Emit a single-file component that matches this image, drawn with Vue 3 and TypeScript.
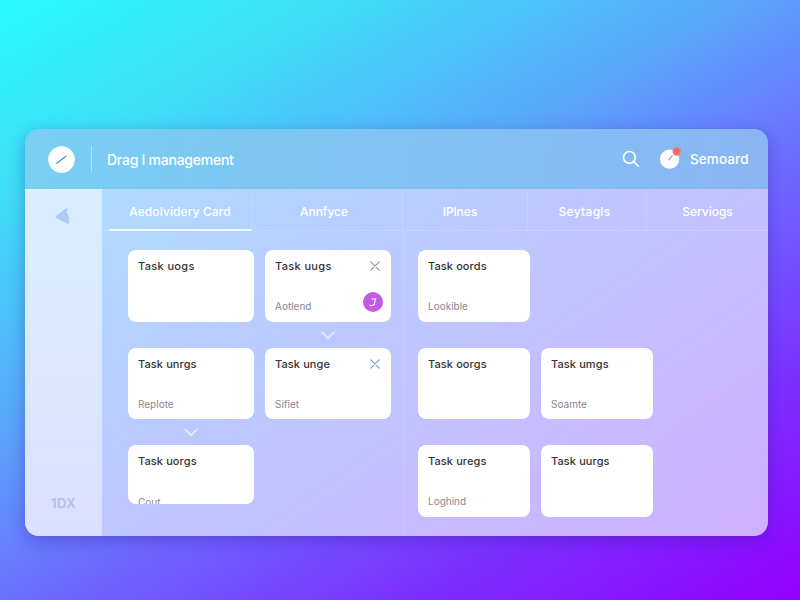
<script setup lang="ts">
interface Task {
  title: string
  note?: string
  close?: 'grey' | 'blue'
  badge?: boolean
  arrow?: boolean
  clipped?: boolean
}

const tabs: string[] = ['Aedolvidery Card', 'Annfyce', 'IPlnes', 'Seytagls', 'Serviogs']

const rows: (Task | null)[][] = [
  [
    { title: 'Task uogs' },
    { title: 'Task uugs', note: 'Aotlend', close: 'grey', badge: true, arrow: true },
    { title: 'Task oords', note: 'Lookible' },
    null,
  ],
  [
    { title: 'Task unrgs', note: 'Replote', arrow: true },
    { title: 'Task unge', note: 'Sifiet', close: 'blue' },
    { title: 'Task oorgs' },
    { title: 'Task umgs', note: 'Soamte' },
  ],
  [
    { title: 'Task uorgs', note: 'Cout', clipped: true },
    null,
    { title: 'Task uregs', note: 'Loghind' },
    { title: 'Task uurgs' },
  ],
]
</script>

<template>
  <main class="scene">
    <section class="panel">
      <header class="header">
        <svg class="logo" viewBox="0 0 27 27">
          <circle cx="13.5" cy="13.5" r="13.3" fill="#fff" />
          <path d="M8.8 17.3 L18 10.2" stroke="#5489b8" stroke-width="1.2" stroke-linecap="round" />
        </svg>
        <span class="divider"></span>
        <h1 class="brand"><span>Drag I management</span></h1>
        <svg class="search" viewBox="0 0 18 18" fill="none" stroke="#fff" stroke-width="1.7" stroke-linecap="round">
          <circle cx="7.4" cy="7.4" r="5.9" />
          <path d="M11.8 11.8 L16.3 16.2" />
        </svg>
        <svg class="avatar" viewBox="0 0 24 24">
          <circle cx="10.6" cy="13.2" r="9.6" fill="#fff" />
          <circle cx="17.7" cy="5.5" r="4.2" fill="#e9786d" />
          <circle cx="17.9" cy="5.4" r="1.5" fill="none" stroke="#c9686f" stroke-width=".8" />
          <path d="M9.7 14.3 C9.5 12.5 11.5 11.5 13.3 9.2 C13 11.6 11.2 12 9.7 14.3Z" fill="#84abc9" stroke="#84abc9" stroke-width=".7" />
        </svg>
        <span class="user">Semoard</span>
      </header>

      <div class="body">
        <aside class="sidebar">
          <svg class="back" viewBox="0 0 16 18">
            <path d="M1 9 L9.6 2.3 Q12.6 0 12.8 2.6 L11.6 5.6 L14.2 9.6 V15.6 Q14.2 17.4 12.2 16.7 L1.4 11.2 Q-.2 10.2 1 9Z" fill="#aecbf4" />
          </svg>
          <span class="zoom">1DX</span>
        </aside>

        <div class="content">
          <nav class="tabs">
            <a v-for="(tab, i) in tabs" :key="tab" class="tab" :class="{ active: i === 0 }">
              <span>{{ tab }}</span>
            </a>
          </nav>

          <div class="board">
            <template v-for="(row, r) in rows" :key="r">
              <div v-for="(task, c) in row" :key="c" class="cell">
                <article v-if="task" class="card" :class="{ clipped: task.clipped }">
                  <div class="top">
                    <h2>{{ task.title }}</h2>
                    <svg v-if="task.close" class="close" :class="task.close" viewBox="0 0 10 10">
                      <path d="M.8 .8 L9.2 9.2 M9.2 .8 L.8 9.2" />
                    </svg>
                  </div>
                  <div class="bottom">
                    <p>{{ task.note }}</p>
                    <svg v-if="task.badge" class="badge" viewBox="0 0 20 20">
                      <circle cx="10" cy="10" r="10" fill="#c35be4" />
                      <path d="M9 7.1 L12.7 6.7 Q13 7.8 11.5 10 Q12.2 12.6 9.6 13.2 L7.1 13.5" fill="none" stroke="#fff" stroke-width="1.1" stroke-linecap="round" stroke-linejoin="round" />
                    </svg>
                  </div>
                </article>
                <svg v-if="task?.arrow" class="arrow" viewBox="0 0 14 9">
                  <path d="M1 1.2 L7 7.2 L13 1.2" />
                </svg>
              </div>
            </template>
          </div>
        </div>
      </div>
    </section>
  </main>
</template>

<style>
body {
  margin: 0;
  overflow: hidden;
}
</style>

<style scoped>
* {
  box-sizing: border-box;
}
.scene {
  width: 800px;
  height: 600px;
  padding: 129px 32px 64px 25px;
  font-family: Inter, "Liberation Sans", sans-serif;
  background: linear-gradient(150deg, #28fbff 0%, #3fdcf8 19%, #58aafa 39%, #6b72ff 56%, #7c2fff 79%, #9400ff 100%);
}
.panel {
  display: flex;
  flex-direction: column;
  height: 407px;
  border-radius: 14px;
  overflow: hidden;
  box-shadow: 0 5px 16px rgba(45, 20, 150, 0.32);
}
.header {
  flex: 0 0 60px;
  display: flex;
  align-items: center;
  padding: 0 19px 0 23px;
  color: #fff;
  background: linear-gradient(100deg, #79cff2 0%, #80c2f2 50%, #8ab5f3 100%);
}
.logo {
  width: 27px;
  height: 27px;
}
.divider {
  width: 1px;
  height: 26px;
  margin: 0 15px 0 16px;
  background: rgba(255, 255, 255, 0.45);
}
.brand {
  flex: 1;
  margin: 0;
  font-size: 14px;
  font-weight: 500;
  letter-spacing: -0.25px;
}
.search {
  width: 18px;
  height: 18px;
  margin-right: 19px;
}
.avatar {
  width: 24px;
  height: 24px;
  margin: -2px 7px 0 0;
}
.user {
  width: 59px;
  font-size: 13.5px;
  font-weight: 500;
  letter-spacing: 0.1px;
  white-space: nowrap;
}
.body {
  flex: 1;
  display: flex;
  background: linear-gradient(145deg, #aee0ff 0%, #b4d3ff 20%, #bec6ff 48%, #c8bbff 72%, #cdb0ff 100%);
}
.sidebar {
  flex: 0 0 77px;
  display: flex;
  flex-direction: column;
  justify-content: space-between;
  align-items: center;
  padding: 18px 0 25px;
  background: linear-gradient(180deg, #d8eeff, #dbe8ff 50%, #dce0ff);
}
.back {
  width: 16px;
  height: 18px;
  margin-right: 2px;
}
.zoom {
  font-size: 13px;
  line-height: 16px;
  font-weight: 600;
  letter-spacing: 0.5px;
  color: #b7bee4;
}
.content {
  flex: 1;
  display: flex;
  flex-direction: column;
}
.tabs {
  flex: 0 0 42px;
  display: grid;
  grid-template-columns: 143px 151px 125px 119px 1fr;
  padding-left: 7px;
  border-bottom: 1px solid rgba(255, 255, 255, 0.16);
}
.tab {
  display: flex;
  align-items: center;
  justify-content: center;
  padding-top: 3px;
  font-size: 12px;
  font-weight: 500;
  color: #fff;
  border-right: 1px solid rgba(255, 255, 255, 0.13);
}
.tab:first-child {
  letter-spacing: 0.1px;
}
.tab:nth-child(2) {
  padding-right: 6px;
}
.tab:nth-child(3) {
  padding-right: 10px;
}
.tab:nth-child(4) {
  padding-right: 5px;
  letter-spacing: 0.3px;
}
.tab:last-child {
  border-right: 0;
}
.active {
  margin-bottom: -1px;
  padding-top: 4px;
  border-bottom: 2px solid #eefcff;
}
.board {
  flex: 1;
  display: grid;
  grid-template-columns: 126px 126px 112px 112px;
  grid-template-rows: 97.5px 97.5px 91px;
  column-gap: 11px;
  padding: 19px 0 0 26px;
  background: linear-gradient(rgba(255, 255, 255, 0.12), rgba(255, 255, 255, 0.12)) 301px 0 / 1px 100% no-repeat;
}
.cell {
  display: flex;
  flex-direction: column;
  align-items: center;
}
.cell:nth-child(4n + 3),
.cell:nth-child(4n) {
  width: 112px;
  margin-left: 16px;
}
.card {
  flex: none;
  display: flex;
  flex-direction: column;
  justify-content: space-between;
  width: 100%;
  height: 71.5px;
  padding: 8px 10px 7.5px;
  border-radius: 8px;
  background: #fff;
  overflow: hidden;
}
.clipped {
  height: 58.5px;
  justify-content: flex-start;
  gap: 26px;
}
.top,
.bottom {
  display: flex;
  justify-content: space-between;
}
.bottom {
  align-items: flex-end;
}
h2 {
  margin: 0;
  font-size: 11px;
  line-height: 16px;
  font-weight: 500;
  letter-spacing: 0.1px;
  color: #343438;
  white-space: nowrap;
}
.cell:nth-child(-n + 2) h2 {
  letter-spacing: 0.35px;
}
p {
  margin: 0;
  font-size: 10px;
  line-height: 15px;
  color: #88898f;
}
.close {
  width: 10px;
  height: 10px;
  margin: 3px 1px 0 0;
  fill: none;
  stroke-width: 1.1;
  stroke-linecap: round;
}
.grey {
  stroke: #8b9298;
}
.blue {
  stroke: #7898c2;
}
.badge {
  width: 20px;
  height: 20px;
  margin: 0 -2px 2px 0;
}
.arrow {
  width: 14px;
  height: 9px;
  margin-top: 9px;
  fill: none;
  stroke: #eef5ff;
  stroke-width: 1.3;
  stroke-linecap: round;
  stroke-linejoin: round;
}
</style>
